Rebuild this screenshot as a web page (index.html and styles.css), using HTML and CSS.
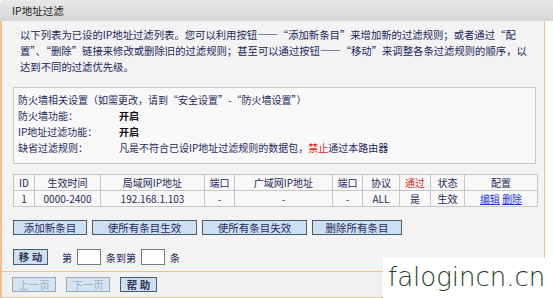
FILE: index.html
```html
<!DOCTYPE html>
<html lang="zh-CN">
<head>
<meta charset="utf-8">
<title>IP地址过滤</title>
<link rel="stylesheet" href="styles.css">
</head>
<body>
<div class="header">IP地址过滤</div>
<div class="frame">
  <div class="content">
    <p class="intro">以下列表为已设的IP地址过滤列表。您可以利用按钮——“添加新条目”来增加新的过滤规则；或者通过“配<br>置”、“删除”链接来修改或删除旧的过滤规则；甚至可以通过按钮——“移动”来调整各条过滤规则的顺序，以<br>达到不同的过滤优先级。</p>
    <div class="box">
      <div class="line">防火墙相关设置（如需更改，请到“安全设置”-“防火墙设置”）</div>
      <div class="line"><span class="label">防火墙功能：</span><b>开启</b></div>
      <div class="line"><span class="label">IP地址过滤功能：</span><b>开启</b></div>
      <div class="line"><span class="label">缺省过滤规则：</span>凡是不符合已设IP地址过滤规则的数据包，<span class="red">禁止</span>通过本路由器</div>
    </div>
    <table class="list">
      <tr>
        <th class="c-id">ID</th>
        <th class="c-time">生效时间</th>
        <th class="c-lan">局域网IP地址</th>
        <th class="c-port">端口</th>
        <th class="c-wan">广域网IP地址</th>
        <th class="c-port2">端口</th>
        <th class="c-proto">协议</th>
        <th class="c-pass red">通过</th>
        <th class="c-state">状态</th>
        <th class="c-cfg">配置</th>
      </tr>
      <tr>
        <td>1</td>
        <td>0000-2400</td>
        <td>192.168.1.103</td>
        <td>-</td>
        <td>-</td>
        <td>-</td>
        <td>ALL</td>
        <td>是</td>
        <td>生效</td>
        <td><a href="#">编辑</a> <a href="#">删除</a></td>
      </tr>
    </table>
    <div class="actions">
      <button class="btn b-add">添加新条目</button>
      <button class="btn b-on">使所有条目生效</button>
      <button class="btn b-off">使所有条目失效</button>
      <button class="btn b-del">删除所有条目</button>
    </div>
    <div class="move">
      <button class="btn b-move">移 动</button>
      <span class="mv-text">第</span>
      <input class="num" type="text">
      <span class="mv-text">条到第</span>
      <input class="num" type="text">
      <span class="mv-text">条</span>
    </div>
  </div>
  <div class="footer">
    <button class="btn b-page" disabled>上一页</button>
    <button class="btn b-page" disabled>下一页</button>
    <button class="btn b-help">帮 助</button>
  </div>
</div>
<div class="watermark">falogincn.cn</div>
</body>
</html>
```

FILE: styles.css
```css
html, body {
  margin: 0;
  padding: 0;
  background: #ffffff;
}
body {
  width: 553px;
  height: 298px;
  overflow: hidden;
  position: relative;
  font-family: "Noto Sans CJK SC", "DejaVu Sans", sans-serif;
  font-size: 10px;
  color: #262a5c;
}
.header {
  height: 21px;
  line-height: 21px;
  padding-left: 12px;
  background: linear-gradient(#e8e8e8, #d6d6d6);
  color: #1a1a1a;
  font-size: 10.5px;
  border-top-left-radius: 4px;
}
.frame {
  width: 545px;
  border-left: 2px solid #efc18c;
  border-right: 1px solid #efc18c;
  background: #f3f3f3;
  height: 277px;
  box-sizing: border-box;
  display: flex;
  flex-direction: column;
}
.content {
  padding: 6px 8px 0 11px;
  height: 251px;
  box-sizing: border-box;
  border-bottom: 1px solid #efc18c;
}
.intro {
  margin: 0 0 12px 7px;
  line-height: 16px;
  font-size: 10.35px;
  white-space: nowrap;
  color: #22265a;
}
.box {
  border: 1px solid #c9c9c9;
  background: #f8f8f8;
  padding: 4px 4px 7px 4px;
  line-height: 16px;
}
.line {
  white-space: nowrap;
}
.label {
  display: inline-block;
  width: 101px;
}
.box b {
  color: #111;
}
.red {
  color: #e02020;
}
.list {
  margin-top: 10px;
  width: 525px;
  border-collapse: collapse;
  background: #f8f8f8;
}
.list th, .list td {
  border: 1px solid #c6c6c6;
  height: 15px;
  padding: 0;
  text-align: center;
  font-weight: normal;
  line-height: 15px;
  white-space: nowrap;
}
.list th { color: #262a5c; }
.list th.red { color: #e02020; }
.c-id { width: 20px; }
.c-time { width: 65px; }
.c-lan { width: 103px; }
.c-port { width: 29px; }
.c-wan { width: 97px; }
.c-port2 { width: 29px; }
.c-proto { width: 36px; }
.c-pass { width: 30px; }
.c-state { width: 33px; }
.list a {
  color: #1a3ad0;
  text-decoration: underline;
}
.actions {
  margin-top: 13px;
  display: flex;
  gap: 5px;
}
.btn {
  font-family: "Noto Sans CJK SC", "DejaVu Sans", sans-serif;
  font-size: 10.5px;
  color: #262a5c;
  background: #cde0f2;
  border: 1px solid #4a5a6a;
  border-right-color: #55606a;
  height: 15px;
  line-height: 12px;
  padding: 0;
  margin: 0;
}
.b-add { width: 74px; }
.b-on { width: 105px; }
.b-off { width: 105px; }
.b-del { width: 90px; }
.move {
  margin-top: 14px;
  display: flex;
  align-items: center;
  height: 16px;
}
.b-move {
  width: 35px;
  height: 16px;
  margin-right: 14px;
  font-weight: bold;
  color: #303050;
}
.mv-text {
  color: #262a5c;
}
.num {
  width: 22px;
  height: 14px;
  padding: 0;
  margin: 0 5px;
  border: 1px solid #7a7a7a;
  background: #ffffff;
  box-sizing: content-box;
}
.footer {
  flex: 1;
  display: flex;
  align-items: center;
  gap: 10px;
  padding-left: 10px;
  border-bottom: 1px solid #efc18c;
  background: #f1f1f1;
  height: 24px;
  box-sizing: border-box;
}
.b-page {
  width: 44px;
  height: 15px;
  color: #9fb0c4;
  border-color: #9aaabb;
  background: #d3e3f2;
}
.b-help {
  width: 37px;
  height: 15px;
  font-weight: bold;
  color: #303050;
}
.watermark {
  position: absolute;
  left: 383px;
  top: 258px;
  width: 170px;
  height: 40px;
  background: #ffffff;
  color: #1f3d22;
  font-family: "DejaVu Sans", sans-serif;
  font-weight: 200;
  font-style: normal;
  font-size: 26px;
  line-height: 38px;
  padding-left: 5px;
  box-sizing: border-box;
  letter-spacing: 0;
}
```
